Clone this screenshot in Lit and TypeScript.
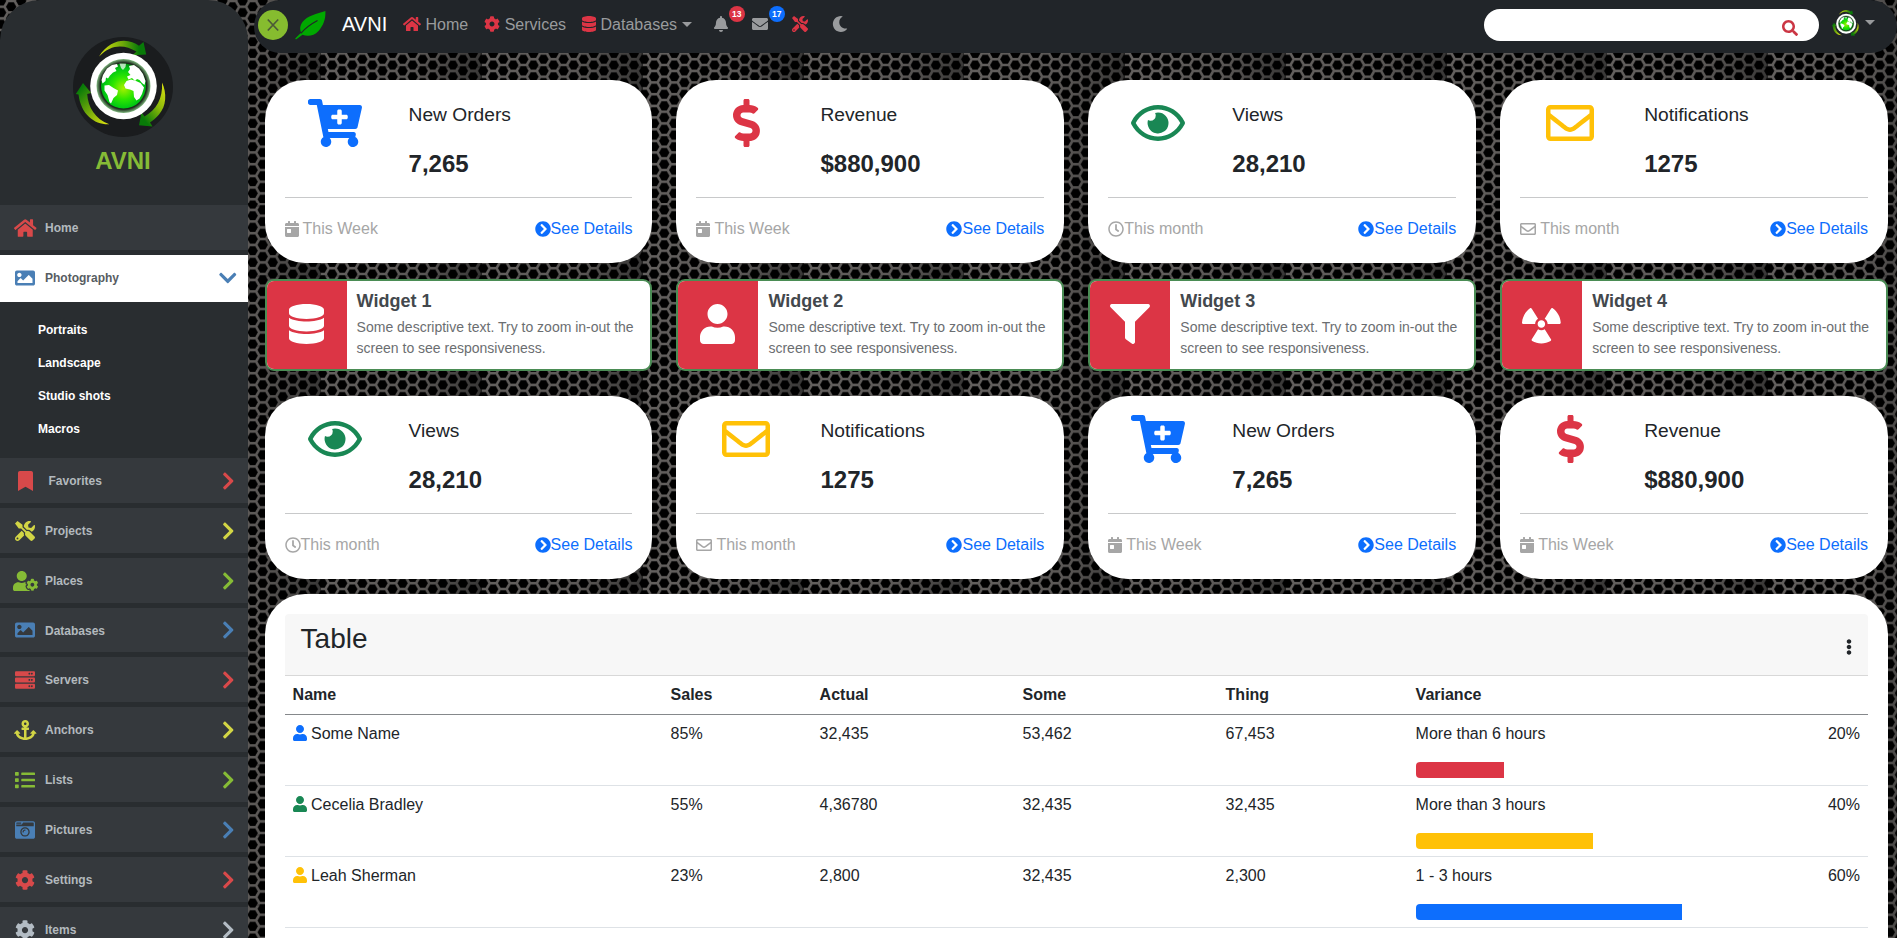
import { LitElement, html, css, svg, unsafeCSS } from "lit";
import { customElement, property } from "lit/decorators.js";

const ICONS: Record<string, [number, string]> = {
  home: [576, "M280.37 148.26L96 300.11V464a16 16 0 0 0 16 16l112.06-.29a16 16 0 0 0 15.92-16V368a16 16 0 0 1 16-16h64a16 16 0 0 1 16 16v95.64a16 16 0 0 0 16 16.05L464 480a16 16 0 0 0 16-16V300L295.67 148.26a12.19 12.19 0 0 0-15.3 0zM571.6 251.47L488 182.56V44.05a12 12 0 0 0-12-12h-56a12 12 0 0 0-12 12v72.61L318.47 43a48 48 0 0 0-61 0L4.34 251.47a12 12 0 0 0-1.6 16.9l25.5 31A12 12 0 0 0 45.15 301l235.22-193.74a12.19 12.19 0 0 1 15.3 0L530.9 301a12 12 0 0 0 16.9-1.6l25.5-31a12 12 0 0 0-1.7-16.93z"],
  image: [512, "M464 448H48c-26.51 0-48-21.49-48-48V112c0-26.51 21.49-48 48-48h416c26.51 0 48 21.49 48 48v288c0 26.51-21.49 48-48 48zM112 120c-30.928 0-56 25.072-56 56s25.072 56 56 56 56-25.072 56-56-25.072-56-56-56zM64 384h384V272l-87.515-87.515c-4.686-4.686-12.284-4.686-16.971 0L208 320l-55.515-55.515c-4.686-4.686-12.284-4.686-16.971 0L64 336v48z"],
  bookmark: [384, "M0 512V48C0 21.49 21.49 0 48 0h288c26.51 0 48 21.49 48 48v464L192 400 0 512z"],
  tools: [512, "M501.1 395.7L384 278.6c-23.1-23.1-57.6-27.6-85.4-13.9L192 158.1V96L64 0 0 64l96 128h62.1l106.6 106.6c-13.6 27.8-9.2 62.3 13.9 85.4l117.1 117.1c14.6 14.6 38.2 14.6 52.7 0l52.7-52.7c14.5-14.6 14.5-38.2 0-52.7zM331.7 225c28.3 0 54.9 11 74.9 31l19.4 19.4c15.8-6.9 30.8-16.5 43.8-29.5 37.1-37.1 49.7-89.3 37.9-136.7-2.2-9-13.5-12.1-20.1-5.5l-74.4 74.4-67.9-11.3L334 98.9l74.4-74.4c6.6-6.6 3.4-17.9-5.7-20.2-47.4-11.7-99.6.9-136.6 37.9-28.5 28.5-41.9 66.1-41.2 103.6l82.1 82.1c8.1-1.9 16.5-2.9 24.7-2.9zm-103.9 82l-56.7-56.7L18.7 402.8c-25 25-25 65.5 0 90.5s65.5 25 90.5 0l123.6-123.6c-7.6-19.9-9.9-41.6-5-62.7zM64 472c-13.2 0-24-10.8-24-24 0-13.3 10.7-24 24-24s24 10.7 24 24c0 13.2-10.7 24-24 24z"],
  userCog: [640, "M610.5 373.3c2.6-14.1 2.6-28.5 0-42.6l25.8-14.9c3-1.7 4.3-5.2 3.3-8.5-6.7-21.6-18.2-41.2-33.2-57.4-2.3-2.5-6-3.1-9-1.4l-25.8 14.9c-10.9-9.3-23.4-16.5-36.9-21.3v-29.8c0-3.4-2.4-6.4-5.7-7.1-22.3-5-45-4.8-66.2 0-3.3.7-5.7 3.7-5.7 7.1v29.8c-13.5 4.8-26 12-36.9 21.3l-25.8-14.9c-2.9-1.7-6.7-1.1-9 1.4-15 16.2-26.5 35.8-33.2 57.4-1 3.3.4 6.8 3.3 8.5l25.8 14.9c-2.6 14.1-2.6 28.5 0 42.6l-25.8 14.9c-3 1.7-4.3 5.2-3.3 8.5 6.7 21.6 18.2 41.1 33.2 57.4 2.3 2.5 6 3.1 9 1.4l25.8-14.9c10.9 9.3 23.4 16.5 36.9 21.3v29.8c0 3.4 2.4 6.4 5.7 7.1 22.3 5 45 4.8 66.2 0 3.3-.7 5.7-3.7 5.7-7.1v-29.8c13.5-4.8 26-12 36.9-21.3l25.8 14.9c2.9 1.7 6.7 1.1 9-1.4 15-16.2 26.5-35.8 33.2-57.4 1-3.3-.4-6.8-3.3-8.5l-25.8-14.9zM496 400.5c-26.8 0-48.5-21.8-48.5-48.5s21.8-48.5 48.5-48.5 48.5 21.8 48.5 48.5-21.7 48.5-48.5 48.5zM224 256c70.7 0 128-57.3 128-128S294.7 0 224 0 96 57.3 96 128s57.3 128 128 128zm201.2 226.5c-2.3-1.2-4.6-2.6-6.8-3.9l-7.9 4.6c-6 3.4-12.8 5.3-19.6 5.3-10.9 0-21.4-4.6-28.9-12.6-18.3-19.8-32.3-43.9-40.2-69.6-5.5-17.7 1.9-36.4 17.9-45.7l7.9-4.6c-.1-2.6-.1-5.2 0-7.8l-7.9-4.6c-16-9.2-23.4-28-17.9-45.7.9-2.9 2.2-5.8 3.2-8.7-3.8-.3-7.5-1.2-11.4-1.2h-16.7c-22.2 10.2-46.9 16-72.9 16s-50.6-5.8-72.9-16h-16.7C60.2 288 0 348.2 0 422.4V464c0 26.5 21.5 48 48 48h352c10.1 0 19.5-3.2 27.2-8.5-1.2-3.8-2-7.7-2-11.8v-9.2z"],
  server: [512, "M480 160H32c-17.673 0-32-14.327-32-32V64c0-17.673 14.327-32 32-32h448c17.673 0 32 14.327 32 32v64c0 17.673-14.327 32-32 32zm-48-88c-13.255 0-24 10.745-24 24s10.745 24 24 24 24-10.745 24-24-10.745-24-24-24zm-64 0c-13.255 0-24 10.745-24 24s10.745 24 24 24 24-10.745 24-24-10.745-24-24-24zm112 248H32c-17.673 0-32-14.327-32-32v-64c0-17.673 14.327-32 32-32h448c17.673 0 32 14.327 32 32v64c0 17.673-14.327 32-32 32zm-48-88c-13.255 0-24 10.745-24 24s10.745 24 24 24 24-10.745 24-24-10.745-24-24-24zm-64 0c-13.255 0-24 10.745-24 24s10.745 24 24 24 24-10.745 24-24-10.745-24-24-24zm112 248H32c-17.673 0-32-14.327-32-32v-64c0-17.673 14.327-32 32-32h448c17.673 0 32 14.327 32 32v64c0 17.673-14.327 32-32 32zm-48-88c-13.255 0-24 10.745-24 24s10.745 24 24 24 24-10.745 24-24-10.745-24-24-24zm-64 0c-13.255 0-24 10.745-24 24s10.745 24 24 24 24-10.745 24-24-10.745-24-24-24z"],
  anchor: [576, "M12.971 352h32.394C67.172 454.735 181.944 512 288 512c106.229 0 220.853-57.38 242.635-160h32.394c10.691 0 16.045-12.926 8.485-20.485l-67.029-67.029c-4.686-4.686-12.284-4.686-16.971 0l-67.029 67.029c-7.56 7.56-2.206 20.485 8.485 20.485h35.146c-20.29 54.317-84.963 86.588-144.117 94.015V256h52c6.627 0 12-5.373 12-12v-40c0-6.627-5.373-12-12-12h-52v-5.47c37.281-13.226 63.992-48.855 63.936-90.71C383.859 43.251 341.042.205 288.5.001 235.261-.206 192 42.876 192 96c0 41.716 26.754 77.178 64 90.53V192h-52c-6.627 0-12 5.373-12 12v40c0 6.627 5.373 12 12 12h52v190.015c-58.936-7.399-123.82-39.679-144.117-94.015h35.146c10.691 0 16.045-12.926 8.485-20.485l-67.029-67.029c-4.686-4.686-12.284-4.686-16.971 0L4.485 331.515C-3.074 339.074 2.28 352 12.971 352zM288 64c17.645 0 32 14.355 32 32s-14.355 32-32 32-32-14.355-32-32 14.355-32 32-32z"],
  list: [512, "M80 368H16a16 16 0 0 0-16 16v64a16 16 0 0 0 16 16h64a16 16 0 0 0 16-16v-64a16 16 0 0 0-16-16zm0-320H16A16 16 0 0 0 0 64v64a16 16 0 0 0 16 16h64a16 16 0 0 0 16-16V64a16 16 0 0 0-16-16zm0 160H16a16 16 0 0 0-16 16v64a16 16 0 0 0 16 16h64a16 16 0 0 0 16-16v-64a16 16 0 0 0-16-16zm416 176H176a16 16 0 0 0-16 16v32a16 16 0 0 0 16 16h320a16 16 0 0 0 16-16v-32a16 16 0 0 0-16-16zm0-320H176a16 16 0 0 0-16 16v32a16 16 0 0 0 16 16h320a16 16 0 0 0 16-16V80a16 16 0 0 0-16-16zm0 160H176a16 16 0 0 0-16 16v32a16 16 0 0 0 16 16h320a16 16 0 0 0 16-16v-32a16 16 0 0 0-16-16z"],
  camera: [512, "M48 32C21.5 32 0 53.5 0 80v352c0 26.5 21.5 48 48 48h416c26.5 0 48-21.5 48-48V80c0-26.5-21.5-48-48-48H48zm0 32h106c3.3 0 6 2.7 6 6v20c0 3.3-2.7 6-6 6H38c-3.3 0-6-2.7-6-6V80c0-8.8 7.2-16 16-16zm426 96H38c-3.3 0-6-2.7-6-6v-36c0-3.3 2.7-6 6-6h138l30.2-45.3c1.1-1.7 3-2.7 5-2.7H464c8.8 0 16 7.2 16 16v74c0 3.3-2.7 6-6 6zM256 424c-66.2 0-120-53.8-120-120s53.8-120 120-120 120 53.8 120 120-53.8 120-120 120zm0-208c-48.5 0-88 39.5-88 88s39.5 88 88 88 88-39.5 88-88-39.5-88-88-88zm-48 104c-8.8 0-16-7.2-16-16 0-35.3 28.7-64 64-64 8.8 0 16 7.2 16 16s-7.2 16-16 16c-17.6 0-32 14.4-32 32 0 8.8-7.2 16-16 16z"],
  cog: [512, "M487.4 315.7l-42.6-24.6c4.3-23.2 4.3-47 0-70.2l42.6-24.6c4.9-2.8 7.1-8.6 5.5-14-11.1-35.6-30-67.8-54.7-94.6-3.8-4.1-10-5.1-14.8-2.3L380.8 110c-17.9-15.4-38.5-27.3-60.8-35.1V25.8c0-5.6-3.9-10.5-9.4-11.7-36.7-8.2-74.3-7.8-109.2 0-5.5 1.2-9.4 6.1-9.4 11.7V75c-22.2 7.9-42.8 19.8-60.8 35.1L88.7 85.5c-4.9-2.8-11-1.9-14.8 2.3-24.7 26.7-43.6 58.9-54.7 94.6-1.7 5.4.6 11.2 5.5 14L67.3 221c-4.3 23.2-4.3 47 0 70.2l-42.6 24.6c-4.9 2.8-7.1 8.6-5.5 14 11.1 35.6 30 67.8 54.7 94.6 3.8 4.1 10 5.1 14.8 2.3l42.6-24.6c17.9 15.4 38.5 27.3 60.8 35.1v49.2c0 5.6 3.9 10.5 9.4 11.7 36.7 8.2 74.3 7.8 109.2 0 5.5-1.2 9.4-6.1 9.4-11.7v-49.2c22.2-7.9 42.8-19.8 60.8-35.1l42.6 24.6c4.9 2.8 11 1.9 14.8-2.3 24.7-26.7 43.6-58.9 54.7-94.6 1.5-5.5-.7-11.3-5.6-14.1zM256 336c-44.1 0-80-35.9-80-80s35.9-80 80-80 80 35.9 80 80-35.9 80-80 80z"],
  right: [320, "M285.476 272.971L91.132 467.314c-9.373 9.373-24.569 9.373-33.941 0l-22.667-22.667c-9.357-9.357-9.375-24.522-.04-33.901L188.505 256 34.484 101.255c-9.335-9.379-9.317-24.544.04-33.901l22.667-22.667c9.373-9.373 24.569-9.373 33.941 0L285.475 239.03c9.373 9.372 9.373 24.568.001 33.941z"],
  down: [448, "M207.029 381.476L12.686 187.132c-9.373-9.373-9.373-24.569 0-33.941l22.667-22.667c9.357-9.357 24.522-9.375 33.901-.04L224 284.505l154.745-154.021c9.379-9.335 24.544-9.317 33.901.04l22.667 22.667c9.373 9.373 9.373 24.569 0 33.941L240.971 381.476c-9.373 9.372-24.569 9.372-33.942 0z"],
  database: [448, "M448 73.143v45.714C448 159.143 347.667 192 224 192S0 159.143 0 118.857V73.143C0 32.857 100.333 0 224 0s224 32.857 224 73.143zM448 176v102.857C448 319.143 347.667 352 224 352S0 319.143 0 278.857V176c48.125 33.143 136.208 48.572 224 48.572S399.874 209.143 448 176zm0 160v102.857C448 479.143 347.667 512 224 512S0 479.143 0 438.857V336c48.125 33.143 136.208 48.572 224 48.572S399.874 369.143 448 336z"],
  bell: [448, "M224 512c35.32 0 63.97-28.65 63.97-64H160.03c0 35.35 28.65 64 63.97 64zm215.39-149.71c-19.32-20.76-55.47-51.99-55.47-154.29 0-77.7-54.48-139.9-127.94-155.16V32c0-17.67-14.32-32-31.98-32s-31.98 14.33-31.98 32v20.84C118.56 68.1 64.08 130.3 64.08 208c0 102.3-36.15 133.53-55.47 154.29-6 6.45-8.66 14.16-8.61 21.71.11 16.4 12.98 32 32.1 32h383.8c19.12 0 32-15.6 32.1-32 .05-7.55-2.61-15.27-8.61-21.71z"],
  mail: [512, "M502.3 190.8c3.9-3.1 9.7-.2 9.7 4.7V400c0 26.5-21.5 48-48 48H48c-26.5 0-48-21.5-48-48V195.6c0-5 5.7-7.8 9.7-4.7 22.4 17.4 52.1 39.5 154.1 113.6 21.1 15.4 56.7 47.8 92.2 47.6 35.7.3 72-32.8 92.3-47.6 102-74.1 131.6-96.3 154-113.7zM256 320c23.2.4 56.6-29.2 73.4-41.4 132.7-96.3 142.8-104.7 173.4-128.7 5.8-4.5 9.2-11.5 9.2-18.9v-19c0-26.5-21.5-48-48-48H48c-26.5 0-48 21.5-48 48v19c0 7.4 3.4 14.3 9.2 18.9 30.6 23.9 40.7 32.4 173.4 128.7 16.8 12.2 50.2 41.8 73.4 41.4z"],
  envelope: [512, "M464 64H48C21.49 64 0 85.49 0 112v288c0 26.51 21.49 48 48 48h416c26.51 0 48-21.49 48-48V112c0-26.51-21.49-48-48-48zm0 48v40.805c-22.422 18.259-58.168 46.651-134.587 106.49-16.841 13.247-50.201 45.072-73.413 44.701-23.208.375-56.579-31.459-73.413-44.701C106.18 199.465 70.425 171.067 48 152.805V112h416zM48 400V214.398c22.914 18.251 55.409 43.862 104.938 82.646 21.857 17.205 60.134 55.186 103.062 54.955 42.717.231 80.509-37.199 103.053-54.947 49.528-38.783 82.032-64.401 104.947-82.653V400H48z"],
  moon: [512, "M283.211 512c78.962 0 151.079-35.925 198.857-94.792 7.068-8.708-.639-21.43-11.562-19.35-124.203 23.654-238.262-71.576-238.262-196.954 0-72.222 38.662-138.635 101.498-174.394 9.686-5.512 7.25-20.197-3.756-22.23A258.156 258.156 0 0 0 283.211 0c-141.309 0-256 114.511-256 256 0 141.309 114.511 256 256 256z"],
  search: [512, "M505 442.7L405.3 343c-4.5-4.5-10.6-7-17-7H372c27.6-35.3 44-79.7 44-128C416 93.1 322.9 0 208 0S0 93.1 0 208s93.1 208 208 208c48.3 0 92.7-16.4 128-44v16.3c0 6.4 2.5 12.5 7 17l99.7 99.7c9.4 9.4 24.6 9.4 33.9 0l28.3-28.3c9.4-9.4 9.4-24.6.1-34zM208 336c-70.7 0-128-57.2-128-128 0-70.7 57.2-128 128-128 70.7 0 128 57.2 128 128 0 70.7-57.2 128-128 128z"],
  cart: [576, "M504.717 320H211.572l6.545 32h268.418c15.401 0 26.816 14.301 23.403 29.319l-5.517 24.276C523.112 414.668 536 433.828 536 456c0 31.202-25.519 56.444-56.824 55.994-29.823-.429-54.35-24.631-55.155-54.447-.44-16.287 6.085-31.049 16.803-41.548H231.176C241.553 426.165 248 440.326 248 456c0 31.813-26.528 57.431-58.67 55.938-28.54-1.325-51.751-24.385-53.251-52.917-1.158-22.034 10.436-41.455 28.051-51.586L93.883 64H24C10.745 64 0 53.255 0 40V24C0 10.745 10.745 0 24 0h102.529c11.401 0 21.228 8.021 23.513 19.19L159.208 64H551.99c15.401 0 26.816 14.301 23.403 29.319l-47.273 208C525.637 312.246 515.923 320 504.717 320zM408 168h-48v-40c0-8.837-7.163-16-16-16h-16c-8.837 0-16 7.163-16 16v40h-48c-8.837 0-16 7.163-16 16v16c0 8.837 7.163 16 16 16h48v40c0 8.837 7.163 16 16 16h16c8.837 0 16-7.163 16-16v-40h48c8.837 0 16-7.163 16-16v-16c0-8.837-7.163-16-16-16z"],
  dollar: [288, "M209.2 233.4l-108-31.6C88.7 198.2 80 186.5 80 173.5c0-16.3 13.2-29.5 29.5-29.5h66.3c12.2 0 24.2 3.7 34.2 10.5 6.1 4.1 14.3 3.1 19.5-2l34.8-34c7.1-6.9 6.1-18.4-1.8-24.5C238 74.8 207.4 64.1 176 64V16c0-8.8-7.2-16-16-16h-32c-8.8 0-16 7.2-16 16v48h-2.5C45.8 64-5.4 118.7.5 183.6c4.2 46.1 39.4 83.6 83.8 96.6l102.5 30c12.5 3.7 21.2 15.3 21.2 28.3 0 16.3-13.2 29.5-29.5 29.5h-66.3C100 368 88 364.3 78 357.5c-6.1-4.1-14.3-3.1-19.5 2l-34.8 34c-7.1 6.9-6.1 18.4 1.8 24.5 24.5 19.2 55.1 29.9 86.5 30v48c0 8.8 7.2 16 16 16h32c8.8 0 16-7.2 16-16v-48.2c46.6-.9 90.3-28.6 105.7-72.7 21.5-61.6-14.6-124.8-72.5-141.7z"],
  eye: [576, "M288 144a110.94 110.94 0 0 0-31.24 5 55.4 55.4 0 0 1 7.24 27 56 56 0 0 1-56 56 55.4 55.4 0 0 1-27-7.24A111.71 111.71 0 1 0 288 144zm284.52 97.4C518.29 135.59 410.93 64 288 64S57.68 135.64 3.48 241.41a32.35 32.35 0 0 0 0 29.19C57.71 376.41 165.07 448 288 448s230.32-71.64 284.52-177.41a32.35 32.35 0 0 0 0-29.19zM288 400c-98.65 0-189.09-55-237.93-144C98.91 167 189.34 112 288 112s189.09 55 237.93 144C477.1 345 386.66 400 288 400z"],
  calendar: [448, "M0 464c0 26.5 21.5 48 48 48h352c26.5 0 48-21.5 48-48V192H0v272zm64-192c0-8.8 7.2-16 16-16h96c8.8 0 16 7.2 16 16v96c0 8.8-7.2 16-16 16H80c-8.8 0-16-7.2-16-16v-96zM400 64h-48V16c0-8.8-7.2-16-16-16h-32c-8.8 0-16 7.2-16 16v48H160V16c0-8.8-7.2-16-16-16h-32c-8.8 0-16 7.2-16 16v48H48C21.5 64 0 85.5 0 112v48h448v-48c0-26.5-21.5-48-48-48z"],
  circleRight: [512, "M256 8c137 0 248 111 248 248S393 504 256 504 8 393 8 256 119 8 256 8zm113.9 231L234.4 103.5c-9.4-9.4-24.6-9.4-33.9 0l-17 17c-9.4 9.4-9.4 24.6 0 33.9L285.1 256 183.5 357.6c-9.4 9.4-9.4 24.6 0 33.9l17 17c9.4 9.4 24.6 9.4 33.9 0L369.9 273c9.4-9.4 9.4-24.6 0-34z"],
  clock: [512, "M256 8C119 8 8 119 8 256s111 248 248 248 248-111 248-248S393 8 256 8zm0 448c-110.5 0-200-89.5-200-200S145.5 56 256 56s200 89.5 200 200-89.5 200-200 200zm61.8-104.4l-84.9-61.7c-3.1-2.3-4.9-5.9-4.9-9.7V116c0-6.6 5.4-12 12-12h32c6.6 0 12 5.4 12 12v141.7l66.8 48.6c5.4 3.9 6.5 11.4 2.6 16.8L334.6 349c-3.9 5.3-11.4 6.5-16.8 2.6z"],
  user: [448, "M224 256c70.7 0 128-57.3 128-128S294.7 0 224 0 96 57.3 96 128s57.3 128 128 128zm89.6 32h-16.7c-22.2 10.2-46.9 16-72.9 16s-50.6-5.8-72.9-16h-16.7C60.2 288 0 348.2 0 422.4V464c0 26.5 21.5 48 48 48h352c26.5 0 48-21.5 48-48v-41.6c0-74.2-60.2-134.4-134.4-134.4z"],
  filter: [512, "M487.976 0H24.028C2.71 0-8.047 25.866 7.058 40.971L192 225.941V432c0 7.831 3.821 15.17 10.237 19.662l80 55.98C298.02 518.69 320 507.493 320 487.98V225.941l184.947-184.97C520.021 25.896 509.338 0 487.976 0z"],
  radiation: [496, "M328.2 255.8h151.6c9.1 0 16.8-7.7 16.2-16.8-5.1-75.8-44.4-142.2-102.5-184.2-7.4-5.3-17.9-2.9-22.7 4.8L290.4 188c22.6 14.3 37.8 39.2 37.8 67.8zm-37.8 67.7c-12.3 7.7-26.8 12.4-42.4 12.4-15.6 0-30-4.7-42.4-12.4L125.2 452c-4.8 7.7-2.4 18.1 5.6 22.4C165.7 493.2 205.6 504 248 504s82.3-10.8 117.2-29.6c8-4.3 10.4-14.8 5.6-22.4l-80.4-128.5zM248 303.8c26.5 0 48-21.5 48-48s-21.5-48-48-48-48 21.5-48 48 21.5 48 48 48zm-231.8-48h151.6c0-28.6 15.2-53.5 37.8-67.7L125.2 59.7c-4.8-7.7-15.3-10.2-22.7-4.8C44.4 96.9 5.1 163.3 0 239.1c-.6 9 7.1 16.7 16.2 16.7z"],
  dots: [192, "M96 184c39.8 0 72 32.2 72 72s-32.2 72-72 72-72-32.2-72-72 32.2-72 72-72zM24 80c0 39.8 32.2 72 72 72s72-32.2 72-72S135.8 8 96 8 24 40.2 24 80zm0 352c0 39.8 32.2 72 72 72s72-32.2 72-72-32.2-72-72-72-72 32.2-72 72z"],
};

const icon = (name: string, size = 16, cls = "") => {
  const [w, d] = ICONS[name];
  return html`<svg class="ico ${cls}" width=${(w * size) / 512} height=${size} viewBox="0 0 ${w} 512"><path fill="currentColor" d=${d}></path></svg>`;
};

/* Metal honeycomb texture: one repeatable tile of 16 columns by 6 rows. */
const TILE_W = 160.75;
const TILE_H = 69.84;
const honeycomb = () => {
  const px = TILE_W / 16;
  const py = TILE_H / 6;
  const hex = (cx: number, cy: number, r: number) =>
    "M" + [0, 60, 120, 180, 240, 300]
      .map((a) => {
        const t = (a * Math.PI) / 180;
        return (cx + r * Math.cos(t)).toFixed(2) + " " + (cy + r * Math.sin(t)).toFixed(2);
      })
      .join("L") + "Z";
  let rim = "";
  let hole = "";
  for (let c = 0; c <= 16; c++)
    for (let r = -1; r <= 6; r++) {
      const x = 1.1 + c * px;
      const y = 1 + r * py + (c % 2 ? py / 2 : 0);
      rim += hex(x, y - 0.2, 5.4);
      hole += hex(x, y, 4.8);
    }
  const s = `<svg xmlns="http://www.w3.org/2000/svg" width="${TILE_W}" height="${TILE_H}"><defs><linearGradient id="g"><stop offset="0" stop-color="#63605e"/><stop offset=".6" stop-color="#5b5856"/><stop offset="1" stop-color="#383736"/></linearGradient></defs><rect width="162" height="71" fill="url(#g)"/><path d="${rim}" fill="#242323"/><path d="${hole}" fill="#000"/><path d="M${TILE_W - 0.8} 0V71M0 ${TILE_H - 3}H162" stroke="#000" stroke-opacity=".4" stroke-width="1.2"/></svg>`;
  return `url("data:image/svg+xml,${encodeURIComponent(s)}")`;
};

const shared = css`
  :host { display: block; }
  * { box-sizing: border-box; }
  .ico { display: block; flex: none; overflow: visible; }
  .red { color: #dc3545; }
  .blue { color: #0d6efd; }
  .green { color: #198754; }
  .yellow { color: #ffc107; }
`;

@customElement("globe-logo")
class GlobeLogo extends LitElement {
  @property({ type: Number }) size = 100;
  @property({ type: Boolean }) bare = false;
  static styles = css`
    :host { display: block; }
    .globe { display: block; }
  `;
  render() {
    return html`<svg class="globe" width=${this.size} height=${this.size} viewBox="0 0 100 100">
      ${svg`<defs>
        <radialGradient id="sea" cx=".5" cy=".55" r=".55"><stop offset="0" stop-color="#a8f000"/><stop offset=".45" stop-color="#2ee600"/><stop offset=".8" stop-color="#00c814"/><stop offset="1" stop-color="#008a10"/></radialGradient>
        <radialGradient id="glow"><stop offset=".7" stop-color="#1b1d1f"/><stop offset=".86" stop-color="#1c2b1c"/><stop offset="1" stop-color="#7fb97f"/></radialGradient>
        <linearGradient id="top"><stop offset="0" stop-color="#d8e010"/><stop offset=".5" stop-color="#6fa80a"/><stop offset=".85" stop-color="#087a08"/></linearGradient>
        <linearGradient id="rt" x1=".9" y1="0" x2=".2" y2="1"><stop offset="0" stop-color="#d8e010"/><stop offset=".45" stop-color="#8ab80a"/><stop offset=".9" stop-color="#087a08"/></linearGradient>
        <linearGradient id="lf" x1=".9" y1="1" x2=".1" y2="0"><stop offset="0" stop-color="#d8e010"/><stop offset=".45" stop-color="#6fa80a"/><stop offset=".9" stop-color="#087a08"/></linearGradient>
      </defs>
      <circle cx="50" cy="50" r=${this.bare ? 0 : 50} fill="#1a1c1e"/>
      <path fill="url(#top)" d="M26 19.5C33 8 43 3.700 51 3.700C57 4 62 6 66 8.700L70.500 5L73.200 17.500L59.500 18.300L63.500 14.500C51 7 38 7 26 19.500Z"/>
      <path fill="url(#rt)" d="M89 45.500C94 56 93.500 69 86 77.500C83 81 79.500 84 77 85.500L79.500 89.500L66 88.300L68.500 75.500L71.500 79.500C83 73 90 62 89 45.500Z"/>
      <path fill="url(#lf)" d="M36.300 87.300C22 88 8 78 5.500 57.500L2.800 57L10 46L18.200 56L14.200 57C15 70 22 82 36.300 87.300Z"/>
      <circle cx="50.500" cy="49" r="33.300" fill="#fff"/>
      <circle cx="50.500" cy="49" r="27" fill="url(#glow)"/>
      <circle cx="50.500" cy="49" r="22.500" fill="url(#sea)"/>
      <g fill="#fff">
        <path d="M30 38L34 31.500L39 28L44 27L45 29.500L42 31L43.500 34L40 35.500L37 38.500L35 41.500L33 40.500L32.500 44L29.500 46.500L28.500 43Z"/>
        <path d="M46.500 26.500L53 26.800L52.500 30L50 33L48 31Z" opacity=".7"/>
        <path d="M31.500 48.500L36 48L40.500 51L45 53.500L44 58L40.500 61L38 66.500L36.500 65L34.500 58L31.500 53.500Z"/>
        <path d="M56 29L61 28L66 31.500L70 37L72.500 44L71.500 48L69 46L66.500 43L64 42L62 44L59 41L55.500 42.500L54 39.500L57.500 38L55 35L57 32Z"/>
        <path d="M53.500 44L58 42.500L63 44L67.500 46L71 50.500L69 57L66.500 61.500L63.500 63.500L61 60L60.500 54L57 52.500L52.500 51.500L51 48Z"/>
      </g>`}
    </svg>`;
  }
}

interface MenuItem { label: string; icon: string; tone: string; cls?: string; sub?: string[]; }
const MENU: MenuItem[] = [
  { label: "Home", icon: "home", tone: "m-red", cls: "plain" },
  { label: "Photography", icon: "image", tone: "m-blue", cls: "open", sub: ["Portraits", "Landscape", "Studio shots", "Macros"] },
  { label: "Favorites", icon: "bookmark", tone: "m-red", cls: "wide" },
  { label: "Projects", icon: "tools", tone: "m-yellow" },
  { label: "Places", icon: "userCog", tone: "m-green" },
  { label: "Databases", icon: "image", tone: "m-blue", cls: "short" },
  { label: "Servers", icon: "server", tone: "m-red" },
  { label: "Anchors", icon: "anchor", tone: "m-yellow" },
  { label: "Lists", icon: "list", tone: "m-green" },
  { label: "Pictures", icon: "camera", tone: "m-blue" },
  { label: "Settings", icon: "cog", tone: "m-red" },
  { label: "Items", icon: "cog", tone: "m-grey" },
];

@customElement("side-bar")
class SideBar extends LitElement {
  static styles = [shared, css`
    .side { width: 248px; height: 938px; overflow: hidden; background: #292d30; border-radius: 40px 40px 0 0; }
    .brand { height: 205px; padding-top: 37px; display: flex; flex-direction: column; align-items: center; padding-right: 2px; }
    .title { margin-top: 8px; font-size: 24px; font-weight: 700; line-height: 32px; color: #86bb36; }
    .item { height: 45px; margin-bottom: 5px; background: #35393d; display: flex; align-items: center; padding-right: 14px; font-size: 12px; font-weight: 700; color: #b3b9be; }
    .item.open { height: 47px; margin-bottom: 0; background: #fff; color: #575d62; padding: 0 12px 2px 0; }
    .item.short { height: 44px; }
    .short .label { padding-top: 1px; }
    .pic { width: 50px; display: flex; justify-content: center; flex: none; }
    .label { margin-left: -5px; flex: 1; }
    .wide .label { margin-left: -1.5px; }
    .sub { height: 156px; padding: 12px 0 0 38px; }
    .link { height: 33px; line-height: 33px; font-size: 12px; font-weight: 700; color: #fff; }
    .m-red { color: #d8494a; }
    .m-blue { color: #4a7fb5; }
    .m-yellow { color: #d2d545; }
    .m-green { color: #86bb36; }
    .m-grey { color: #b3bcc4; }
  `];
  render() {
    return html`<nav class="side">
      <div class="brand"><globe-logo></globe-logo><div class="title">AVNI</div></div>
      ${MENU.map((m) => html`<div class="item ${m.cls ?? ""}">
          <span class="pic ${m.tone}">${icon(m.icon, 20)}</span>
          <span class="label">${m.label}</span>
          ${m.cls === "plain" ? "" : html`<span class=${m.tone}>${icon(m.sub ? "down" : "right", 20)}</span>`}
        </div>
        ${m.sub ? html`<div class="sub">${m.sub.map((s) => html`<div class="link">${s}</div>`)}</div>` : ""}`)}
    </nav>`;
  }
}

@customElement("top-bar")
class TopBar extends LitElement {
  static styles = [shared, css`
    .bar { height: 53px; margin-left: 6px; border-radius: 26.5px; background: #212529; display: flex; align-items: flex-start; padding-left: 4px; color: #999b9d; font-size: 16px; line-height: 24px; }
    .close { width: 30px; height: 30px; margin-top: 10px; border-radius: 50%; background: #86bc2f; display: flex; align-items: center; justify-content: center; color: #4b5a38; }
    .leaf { margin: 11px 0 0 7px; display: block; }
    .name { margin: 9px 0 0 16px; font-size: 20px; line-height: 30px; color: #fff; width: 61px; }
    .link { display: flex; align-items: center; margin-top: 11px; gap: 4.5px; margin-right: 16px; }
    .word { padding-top: 2px; }
    .caret { border: solid transparent; border-width: 5px 5px 0; border-top-color: currentColor; }
    .tool { position: relative; margin-top: 16px; }
    .bell { margin-left: 6px; }
    .next { margin-left: 24px; }
    .badge { position: absolute; left: 15px; top: -10.5px; width: 16.5px; height: 16.5px; border-radius: 50%; color: #fff; font-size: 8.5px; font-weight: 700; line-height: 16.5px; text-align: center; }
    .b-red { background: #dc3545; }
    .b-blue { background: #0d6efd; left: 17px; }
    .grow { flex: 1; }
    .search { width: 335px; height: 32px; margin-top: 9px; border-radius: 16px; background: #fff; display: flex; justify-content: flex-end; padding: 11px 21px 0 0; color: #cb3644; }
    .me { margin: 9px 4px 0 12px; }
    .end { margin: 20px 22px 0 0; }
  `];
  render() {
    return html`<header class="bar">
      <div class="close"><svg class="ico" width="12" height="12" viewBox="0 0 12 12"><path d="M0.800 0.500L11.200 11.500M11.200 0.500L0.800 11.500" stroke="currentColor" stroke-width="1.7" fill="none"></path></svg></div>
      <svg class="leaf" width="31" height="29" viewBox="0 0 31 29"><path fill="#00a800" d="M30.400 0C22 2.600 12 5 7.500 11C4.600 15 4.800 19 6.200 21.500L0.200 27.400L1 28.600L7.500 23.800C12 25.600 19 25.300 23.500 20C28 14.500 30.800 9 30.400 0Z"></path><path d="M5.800 22.300C10 17.500 15 13.500 22.500 9.500" stroke="#212529" stroke-width="1.100" fill="none"></path></svg>
      <div class="name">AVNI</div>
      <div class="link"><span class="red">${icon("home")}</span><span class="word">Home</span></div>
      <div class="link"><span class="red">${icon("cog")}</span><span class="word">Services</span></div>
      <div class="link"><span class="red">${icon("database")}</span><span class="word">Databases</span><span class="caret"></span></div>
      <div class="tool bell">${icon("bell")}<span class="badge b-red">13</span></div>
      <div class="tool next">${icon("mail")}<span class="badge b-blue">17</span></div>
      <div class="tool next red">${icon("tools")}</div>
      <div class="tool next">${icon("moon")}</div>
      <div class="grow"></div>
      <div class="search">${icon("search")}</div>
      <globe-logo class="me" size="30" bare></globe-logo>
      <div class="caret end"></div>
    </header>`;
  }
}

type Stat = { label: string; value: string; icon: string; tone: string; foot: string; footIcon: string; gap: boolean };
const S: Record<string, Stat> = {
  orders: { label: "New Orders", value: "7,265", icon: "cart", tone: "blue", foot: "This Week", footIcon: "calendar", gap: true },
  revenue: { label: "Revenue", value: "$880,900", icon: "dollar", tone: "red", foot: "This Week", footIcon: "calendar", gap: true },
  views: { label: "Views", value: "28,210", icon: "eye", tone: "green", foot: "This month", footIcon: "clock", gap: false },
  notes: { label: "Notifications", value: "1275", icon: "envelope", tone: "yellow", foot: "This month", footIcon: "envelope", gap: true },
};

@customElement("stat-card")
class StatCard extends LitElement {
  @property({ attribute: false }) data!: Stat;
  static styles = [shared, css`
    .card { height: 182.5px; background: #fff; border-radius: 40px; padding: 19px 20px 0; color: #212529; }
    .head { display: flex; height: 99px; border-bottom: 1px solid #c8c9ca; }
    .pic { width: 100px; display: flex; justify-content: center; flex: none; }
    .text { padding-left: 24px; }
    .label { font-size: 19.2px; line-height: 23px; margin-top: 4px; }
    .value { font-size: 24px; font-weight: 700; line-height: 29px; margin-top: 23px; }
    .foot { display: flex; justify-content: space-between; margin-top: 19px; line-height: 24px; font-size: 16px; color: #a6a6a6; }
    .part { display: flex; align-items: center; }
    .gap { gap: 4px; }
  `];
  render() {
    const d = this.data;
    return html`<section class="card">
      <div class="head">
        <div class="pic ${d.tone}">${icon(d.icon, 48)}</div>
        <div class="text"><div class="label">${d.label}</div><div class="value">${d.value}</div></div>
      </div>
      <div class="foot">
        <span class="part ${d.gap ? "gap" : ""}">${icon(d.footIcon)}${d.foot}</span>
        <span class="part blue">${icon("circleRight")}See Details</span>
      </div>
    </section>`;
  }
}

@customElement("info-widget")
class InfoWidget extends LitElement {
  @property() label = "";
  @property() icon = "";
  static styles = [shared, css`
    .widget { height: 92px; display: flex; background: #fff; border: 2px solid #4a8c54; border-radius: 9px; overflow: hidden; }
    .side { width: 80px; flex: none; background: #dc3545; color: #fff; display: flex; align-items: center; justify-content: center; padding: 0 1px 2px 0; }
    .text { padding: 9px 0 0 10px; white-space: nowrap; }
    .title { font-size: 18px; font-weight: 700; line-height: 22px; color: #43484d; }
    .desc { font-size: 14px; line-height: 21px; margin-top: 5px; color: #6b6e71; }
  `];
  render() {
    return html`<section class="widget">
      <div class="side">${icon(this.icon, 40)}</div>
      <div class="text"><div class="title">${this.label}</div>
        <div class="desc">Some descriptive text. Try to zoom in-out the<br />screen to see responsiveness.</div></div>
    </section>`;
  }
}

const ROWS = [
  { tone: "blue", name: "Some Name", sales: "85%", actual: "32,435", some: "53,462", thing: "67,453", text: "More than 6 hours", pct: 20, bar: "bg-red" },
  { tone: "green", name: "Cecelia Bradley", sales: "55%", actual: "4,36780", some: "32,435", thing: "32,435", text: "More than 3 hours", pct: 40, bar: "bg-yellow" },
  { tone: "yellow", name: "Leah Sherman", sales: "23%", actual: "2,800", some: "32,435", thing: "2,300", text: "1 - 3 hours", pct: 60, bar: "bg-blue" },
];

@customElement("data-table")
class DataTable extends LitElement {
  static styles = [shared, css`
    .card { background: #fff; border-radius: 40px 40px 0 0; height: 400px; padding: 20px 20px 0; color: #212529; font-size: 16px; line-height: 24px; }
    .head { height: 62px; background: #f7f7f7; border-bottom: 1px solid #d8d8d8; border-radius: 4px 4px 0 0; display: flex; justify-content: space-between; padding: 8px 16px 0; }
    .title { font-size: 28px; line-height: 34px; }
    .menu { padding-top: 16.5px; }
    .row { display: grid; grid-template-columns: 378px 149px 203px 203px 190px 1fr; padding: 7px 8px 7px; border-bottom: 1px solid #dee2e6; }
    .th { font-weight: 700; padding: 7px 8px; border-bottom-color: #85888b; }
    .who { display: flex; align-items: flex-start; gap: 4.45px; }
    .pic { padding-top: 2.5px; }
    .line { display: flex; justify-content: space-between; }
    .track { height: 16px; margin-top: 16px; border-radius: 4px; overflow: hidden; display: flex; }
    .bg-red { background: #dc3545; }
    .bg-yellow { background: #ffc107; }
    .bg-blue { background: #0d6efd; }
  `];
  render() {
    return html`<section class="card">
      <div class="head"><div class="title">Table</div><div class="menu">${icon("dots")}</div></div>
      <div class="row th"><span>Name</span><span>Sales</span><span>Actual</span><span>Some</span><span>Thing</span><span>Variance</span></div>
      ${ROWS.map((r) => html`<div class="row">
        <span class="who"><span class="pic ${r.tone}">${icon("user")}</span>${r.name}</span>
        <span>${r.sales}</span><span>${r.actual}</span><span>${r.some}</span><span>${r.thing}</span>
        <div><div class="line"><span>${r.text}</span><span>${r.pct}%</span></div>
          <div class="track"><div class=${r.bar} style="width:${r.pct}%"></div></div></div>
      </div>`)}
    </section>`;
  }
}

@customElement("app-root")
class AppRoot extends LitElement {
  static styles = [shared, css`
    :host { display: block; height: 938px; overflow: hidden; font-family: "Liberation Sans", Arial, sans-serif; background: #000 ${unsafeCSS(honeycomb())} 0 0 / ${TILE_W}px ${unsafeCSS(TILE_H)}px; }
    .page { display: grid; grid-template-columns: 248px 1fr; }
    .main { padding: 27px 9px 0 16.6px; }
    .grid { display: grid; grid-template-columns: repeat(4, 1fr); column-gap: 24px; }
    .gap-a { margin-top: 16.5px; }
    .gap-b { margin-top: 25px; }
    .gap-c { margin-top: 15.5px; }
  `];
  render() {
    return html`<div class="page">
      <side-bar></side-bar>
      <div>
        <top-bar></top-bar>
        <main class="main">
          <div class="grid">${[S.orders, S.revenue, S.views, S.notes].map((d) => html`<stat-card .data=${d}></stat-card>`)}</div>
          <div class="grid gap-a">${["database", "user", "filter", "radiation"].map((n, i) => html`<info-widget label="Widget ${i + 1}" icon=${n}></info-widget>`)}</div>
          <div class="grid gap-b">${[S.views, S.notes, S.orders, S.revenue].map((d) => html`<stat-card .data=${d}></stat-card>`)}</div>
          <data-table class="gap-c"></data-table>
        </main>
      </div>
    </div>`;
  }
}
